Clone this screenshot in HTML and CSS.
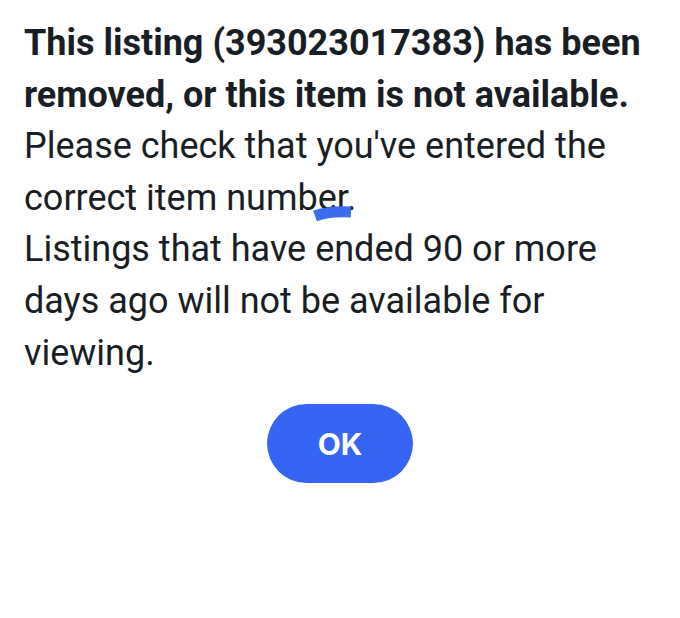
FILE: index.html
```html
<!DOCTYPE html>
<html lang="en">
<head>
    <meta charset="UTF-8">
    <meta name="viewport" content="width=device-width, initial-scale=1.0">
    <title>Listing unavailable</title>
    <link rel="stylesheet" href="styles.css">
</head>
<body>
    <div class="dialog">
        <div class="message">
            <p class="message-title">This listing (393023017383) has been removed, or this item is not available.</p>
            <p class="message-text">Please check that you've entered the correct item <span class="scribbled">number.<svg class="scribble" viewBox="0 0 40 16" aria-hidden="true"><path d="M2 11 C 10 8, 22 6, 38 7" /></svg></span></p>
            <p class="message-text">Listings that have ended 90 or more days ago will not be available for viewing.</p>
        </div>
        <div class="actions">
            <button class="btn-ok">OK</button>
        </div>
    </div>
</body>
</html>
```

FILE: styles.css
```css
* {
    box-sizing: border-box;
}
body {
    margin: 0;
    background: #fff;
    font-family: Roboto, "Noto Sans", sans-serif;
    color: #191e25;
}
.dialog {
    width: 680px;
    padding: 18px 24px 0 24px;
}
.message p {
    margin: 0;
    font-size: 36px;
    line-height: 51.6px;
}
.message-title {
    font-weight: 700;
}
.scribbled {
    position: relative;
}
/* blue pen mark drawn over the end of the word */
.scribble {
    position: absolute;
    right: 3px;
    bottom: -2px;
    width: 40px;
    height: 16px;
    overflow: visible;
}
.scribble path {
    fill: none;
    stroke: #3c6df0;
    stroke-width: 11;
}
.actions {
    display: flex;
    justify-content: center;
    padding-top: 25px;
}
.btn-ok {
    width: 146px;
    height: 79px;
    border: none;
    border-radius: 40px;
    background: #3665f3;
    color: #fff;
    font-family: Inter, Roboto, sans-serif;
    font-size: 30px;
    font-weight: 700;
}
```
